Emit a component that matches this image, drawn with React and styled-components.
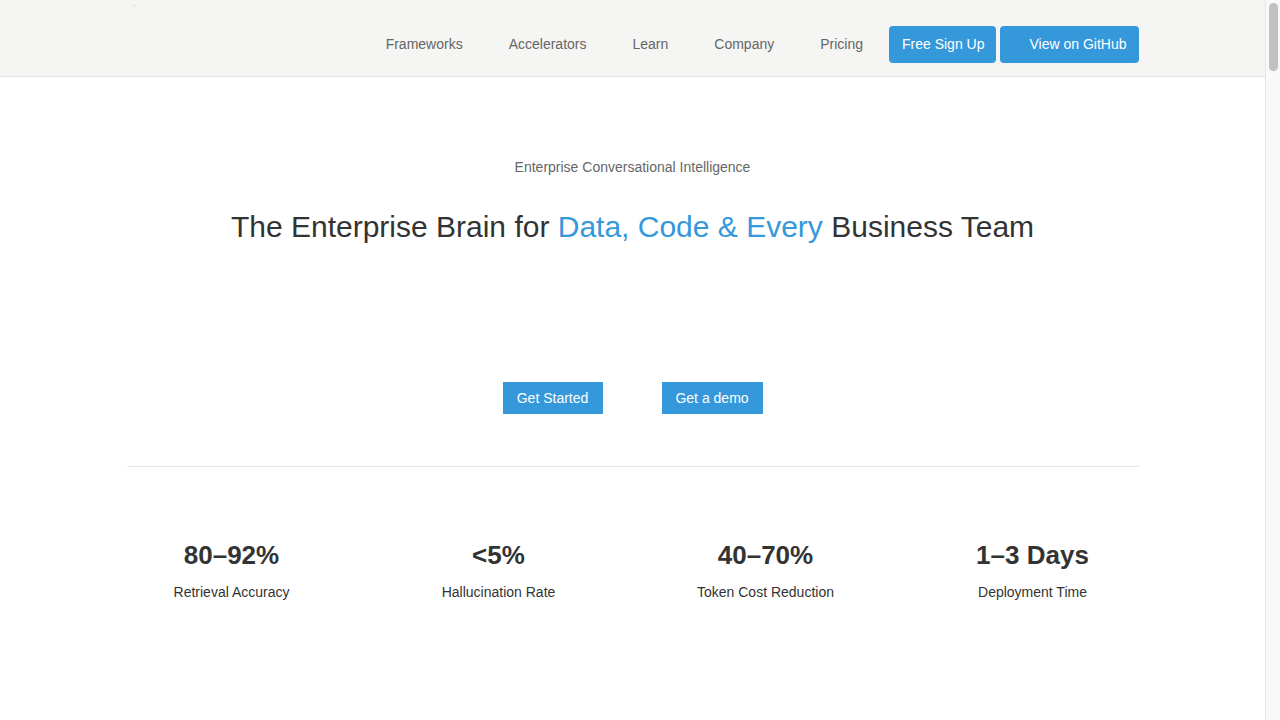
import React from "react";
import styled, { createGlobalStyle } from "styled-components";

const Global = createGlobalStyle`
  html, body { margin: 0; padding: 0; }
  html { scrollbar-width: none; }
  html::-webkit-scrollbar { display: none; }
  body {
    font-family: "Liberation Sans", Arial, Helvetica, sans-serif;
    background: #ffffff;
    color: #333333;
    padding-right: 15px;
  }
  * { box-sizing: border-box; }
`;

const ScrollRail = styled.div`
  position: fixed;
  top: 0;
  right: 0;
  width: 15px;
  height: 100vh;
  background: #f9f9f9;
  border-left: 1px solid #e6e6e6;
  padding: 3px 2px 0 3px;
`;

const ScrollThumb = styled.div`
  width: 9px;
  height: 68px;
  border-radius: 5px;
  background: #c1c1c1;
`;

const Header = styled.header`
  background: #f5f5f3;
  border-bottom: 1px solid #e3e3e1;
  height: 77px;
`;

const Container = styled.div`
  width: 1012px;
  margin: 0 auto;
`;

const HeaderInner = styled(Container)`
  height: 76px;
  padding-top: 12px;
  display: flex;
  align-items: center;
  justify-content: space-between;
  position: relative;
`;

const LogoDot = styled.span`
  position: absolute;
  left: 6px;
  top: 5px;
  width: 2px;
  height: 1px;
  background: #d6d6d6;
`;

const Nav = styled.nav`
  display: flex;
  align-items: center;
  margin-left: auto;
`;

const NavLink = styled.a`
  font-size: 14px;
  color: #666666;
  text-decoration: none;
  padding: 0 23px;
  line-height: 37px;
`;

const NavButton = styled.a`
  display: flex;
  align-items: center;
  height: 37px;
  background: #3498db;
  color: #ffffff;
  font-size: 14px;
  text-decoration: none;
  border-radius: 4px;
  padding: ${(p) => (p.$icon ? "0 12px 0 29px" : "0 12px 0 13px")};
  margin-left: ${(p) => (p.$first ? "3px" : "4px")};
`;

const Hero = styled.section`
  text-align: center;
  padding-top: 82px;
`;

const Eyebrow = styled.p`
  margin: 0;
  font-size: 14px;
  color: #666666;
  line-height: 16px;
`;

const Title = styled.h1`
  margin: 32px 0 0;
  font-size: 30px;
  font-weight: 400;
  color: #333333;
  line-height: 40px;
`;

const Accent = styled.span`
  color: #3498db;
`;

const Actions = styled.div`
  display: flex;
  justify-content: center;
  gap: 59px;
  margin-top: 135px;
`;

const CTA = styled.a`
  display: inline-flex;
  align-items: center;
  justify-content: center;
  width: ${(p) => p.$w}px;
  height: 32px;
  background: #3498db;
  color: #ffffff;
  font-size: 14px;
  text-decoration: none;
`;

const Divider = styled.hr`
  border: 0;
  border-top: 1px solid #e5e5e5;
  margin: 52px 0 0;
`;

const Stats = styled.div`
  display: grid;
  grid-template-columns: repeat(4, 210px);
  column-gap: 57px;
  padding-top: 73px;
  min-height: 7000px;
  align-content: start;
`;

const Stat = styled.div`
  text-align: center;
`;

const Value = styled.div`
  font-size: 26px;
  font-weight: 700;
  color: #333333;
  line-height: 30px;
`;

const Label = styled.div`
  margin-top: 14px;
  font-size: 14px;
  color: #333333;
  line-height: 16px;
`;

const stats = [
  ["80–92%", "Retrieval Accuracy"],
  ["<5%", "Hallucination Rate"],
  ["40–70%", "Token Cost Reduction"],
  ["1–3 Days", "Deployment Time"],
];

export default function App() {
  return (
    <>
      <Global />
      <Header>
        <HeaderInner>
          <LogoDot />
          <Nav>
            <NavLink href="#">Frameworks</NavLink>
            <NavLink href="#">Accelerators</NavLink>
            <NavLink href="#">Learn</NavLink>
            <NavLink href="#">Company</NavLink>
            <NavLink href="#">Pricing</NavLink>
            <NavButton href="#" $first>Free Sign Up</NavButton>
            <NavButton href="#" $icon>View on GitHub</NavButton>
          </Nav>
        </HeaderInner>
      </Header>
      <Container>
        <Hero>
          <Eyebrow>Enterprise Conversational Intelligence</Eyebrow>
          <Title>
            The Enterprise Brain for <Accent>Data, Code &amp; Every</Accent> Business Team
          </Title>
          <Actions>
            <CTA href="#" $w={100}>Get Started</CTA>
            <CTA href="#" $w={101}>Get a demo</CTA>
          </Actions>
        </Hero>
        <Divider />
        <Stats>
          {stats.map(([v, l]) => (
            <Stat key={l}>
              <Value>{v}</Value>
              <Label>{l}</Label>
            </Stat>
          ))}
        </Stats>
      </Container>
      <ScrollRail aria-hidden="true">
        <ScrollThumb />
      </ScrollRail>
    </>
  );
}
